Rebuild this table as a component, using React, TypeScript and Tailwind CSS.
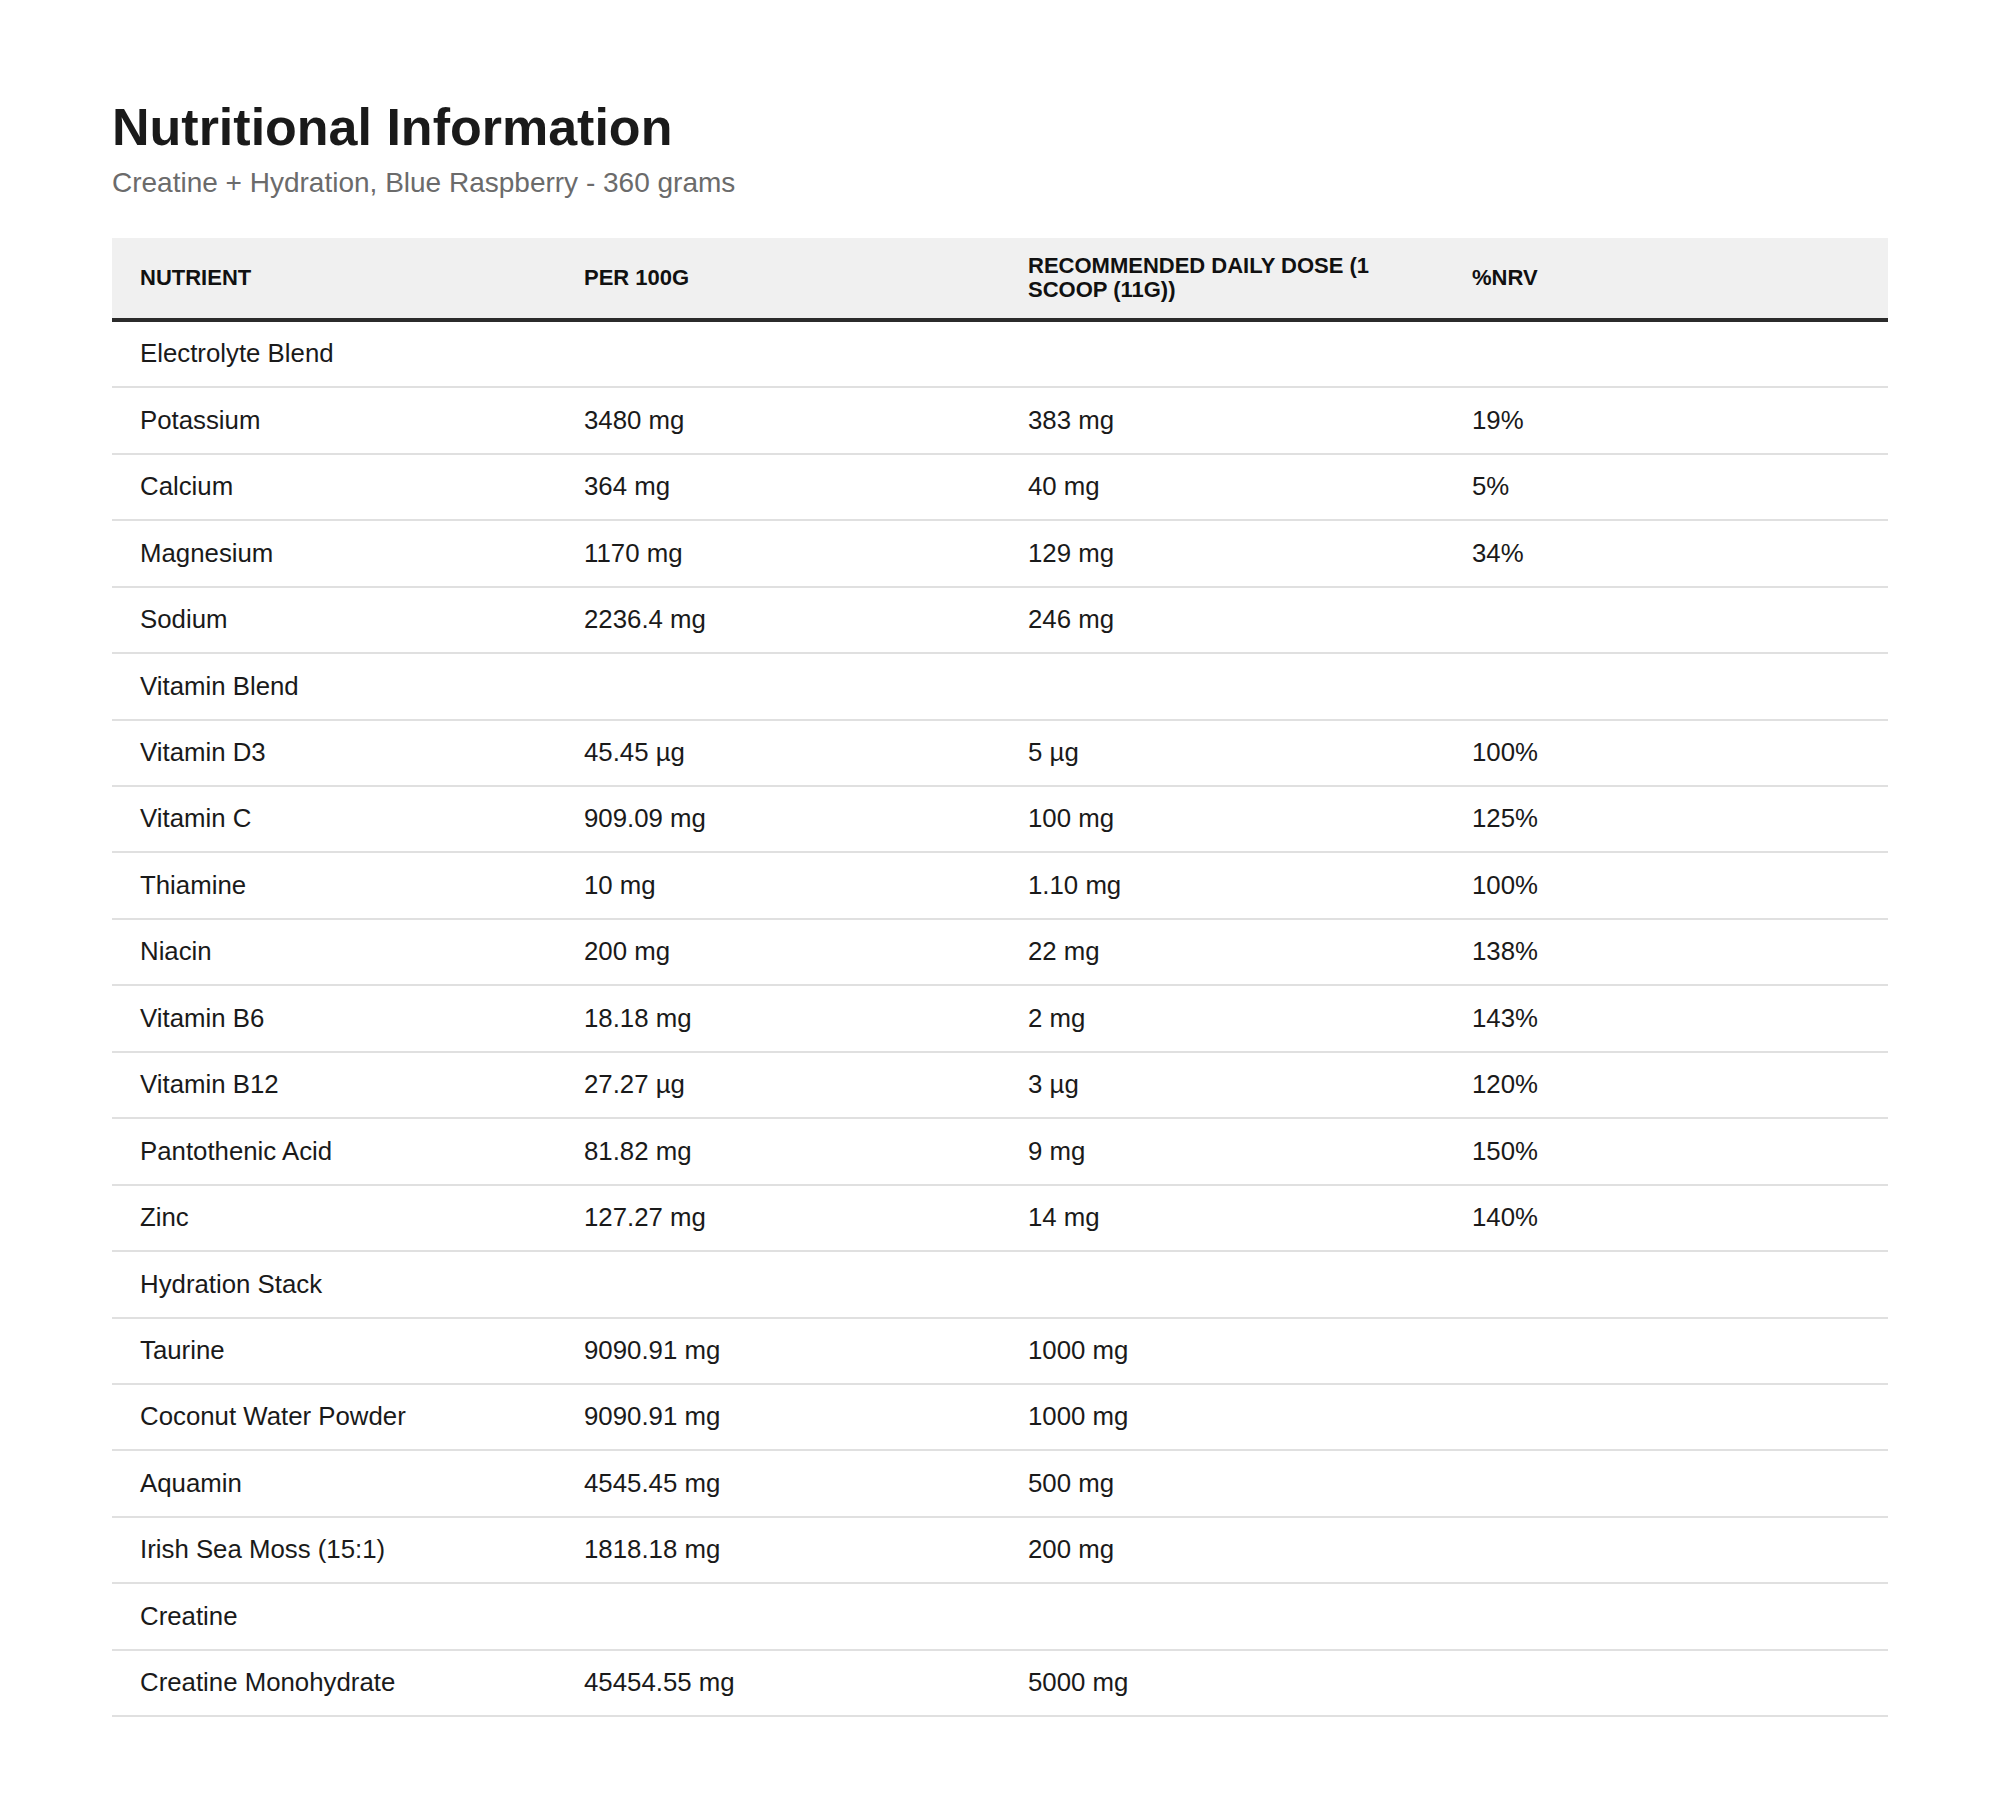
type NutrientRow = {
  name: string;
  per100?: string;
  dose?: string;
  nrv?: string;
};

const rows: NutrientRow[] = [
  { name: "Electrolyte Blend" },
  { name: "Potassium", per100: "3480 mg", dose: "383 mg", nrv: "19%" },
  { name: "Calcium", per100: "364 mg", dose: "40 mg", nrv: "5%" },
  { name: "Magnesium", per100: "1170 mg", dose: "129 mg", nrv: "34%" },
  { name: "Sodium", per100: "2236.4 mg", dose: "246 mg" },
  { name: "Vitamin Blend" },
  { name: "Vitamin D3", per100: "45.45 µg", dose: "5 µg", nrv: "100%" },
  { name: "Vitamin C", per100: "909.09 mg", dose: "100 mg", nrv: "125%" },
  { name: "Thiamine", per100: "10 mg", dose: "1.10 mg", nrv: "100%" },
  { name: "Niacin", per100: "200 mg", dose: "22 mg", nrv: "138%" },
  { name: "Vitamin B6", per100: "18.18 mg", dose: "2 mg", nrv: "143%" },
  { name: "Vitamin B12", per100: "27.27 µg", dose: "3 µg", nrv: "120%" },
  { name: "Pantothenic Acid", per100: "81.82 mg", dose: "9 mg", nrv: "150%" },
  { name: "Zinc", per100: "127.27 mg", dose: "14 mg", nrv: "140%" },
  { name: "Hydration Stack" },
  { name: "Taurine", per100: "9090.91 mg", dose: "1000 mg" },
  { name: "Coconut Water Powder", per100: "9090.91 mg", dose: "1000 mg" },
  { name: "Aquamin", per100: "4545.45 mg", dose: "500 mg" },
  { name: "Irish Sea Moss (15:1)", per100: "1818.18 mg", dose: "200 mg" },
  { name: "Creatine" },
  { name: "Creatine Monohydrate", per100: "45454.55 mg", dose: "5000 mg" },
];

const headers = ["Nutrient", "Per 100g", "Recommended Daily Dose (1 Scoop (11g))", "%NRV"];

export default function App() {
  return (
    <div className="min-h-screen bg-white px-[112px] pt-[97px] pb-[96px] font-['Liberation_Sans',Arial,sans-serif] text-[#1a1a1a]">
      <h1 className="text-[52px] leading-[60px] font-bold text-[#1a1a1a]">
        Nutritional Information
      </h1>
      <p className="mt-[10.4px] text-[28px] leading-[32.2px] text-[#6b6b6b]">
        Creatine + Hydration, Blue Raspberry - 360 grams
      </p>

      <table className="mt-[38.4px] w-full table-fixed border-separate border-spacing-0">
        <thead>
          <tr>
            {headers.map((h) => (
              <th
                key={h}
                className="border-b-4 border-[#2b2b2b] bg-[#f0f0f0] px-[28px] py-[16.5px] text-left align-middle text-[22px] leading-[23.5px] font-bold uppercase text-[#111111]"
              >
                {h}
              </th>
            ))}
          </tr>
        </thead>
        <tbody>
          {rows.map((row) => (
            <tr key={row.name}>
              <td className="border-b-2 border-[#e0e0e0] px-[28px] py-[17.4px] text-[25.8px] leading-[29.65px]">
                {row.name}
              </td>
              <td className="border-b-2 border-[#e0e0e0] px-[28px] py-[17.4px] text-[25.8px] leading-[29.65px]">
                {row.per100 ?? ""}
              </td>
              <td className="border-b-2 border-[#e0e0e0] px-[28px] py-[17.4px] text-[25.8px] leading-[29.65px]">
                {row.dose ?? ""}
              </td>
              <td className="border-b-2 border-[#e0e0e0] px-[28px] py-[17.4px] text-[25.8px] leading-[29.65px]">
                {row.nrv ?? ""}
              </td>
            </tr>
          ))}
        </tbody>
      </table>
    </div>
  );
}
